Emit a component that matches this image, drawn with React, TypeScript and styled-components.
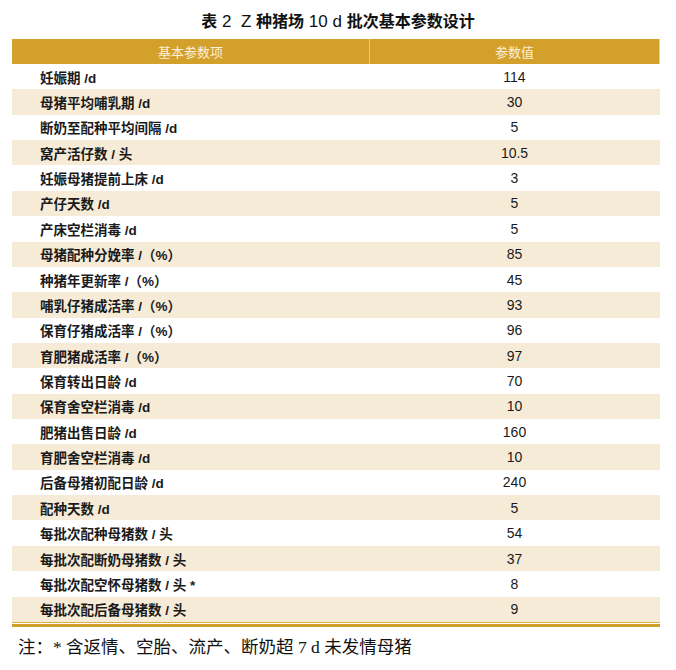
import React from "react";
import styled, { createGlobalStyle } from "styled-components";

const GlobalStyle = createGlobalStyle`
  html, body {
    margin: 0;
    padding: 0;
    background: #ffffff;
  }
  body {
    font-family: "Liberation Sans", Arial, "Noto Sans CJK SC", sans-serif;
    color: #1a1a1a;
  }
`;

const Page = styled.div`
  width: 648px;
  padding: 0 16px 0 12px;
`;

const Title = styled.h1`
  margin: 0;
  height: 39px;
  padding-top: 13px;
  box-sizing: border-box;
  text-align: center;
  font-size: 16px;
  line-height: 18px;
  font-weight: bold;
  color: #111;
  padding-left: 4px;
`;

const Latin = styled.span`
  font-weight: normal;
  font-size: 17px;
`;

const Table = styled.div`
  display: flex;
  flex-direction: column;
`;

const HeadRow = styled.div`
  display: grid;
  grid-template-columns: 357px 1fr;
  height: 25px;
  background: #d4a02c;
  border-right: 1px solid #ecd08f;
`;

const HeadCell = styled.div<{ $divider?: boolean }>`
  display: flex;
  align-items: center;
  justify-content: center;
  font-size: 13px;
  color: #fbf0da;
  border-left: ${({ $divider }) => ($divider ? "1px solid #eccb80" : "none")};
`;

const Row = styled.div<{ $shaded: boolean }>`
  display: grid;
  grid-template-columns: 357px 1fr;
  height: 25.36px;
  background: ${({ $shaded }) => ($shaded ? "#f6ebd6" : "#ffffff")};
`;

const NameCell = styled.div`
  display: flex;
  align-items: center;
  padding-left: 28px;
  font-size: 13.5px;
  font-weight: bold;
`;

const ValueCell = styled.div`
  display: flex;
  align-items: center;
  justify-content: center;
  font-size: 14px;
`;

const Rule = styled.div`
  height: 1px;
  border-top: 1px solid #dcae4c;
  border-bottom: 3px solid #d4a02c;
`;

const Note = styled.p`
  margin: 0;
  padding: 10px 0 0 6px;
  font-family: "Liberation Serif", "Times New Roman", "Noto Sans CJK SC", serif;
  font-size: 17.5px;
  line-height: 20px;
  color: #111;
`;

const params: [string, string][] = [
  ["妊娠期 /d", "114"],
  ["母猪平均哺乳期 /d", "30"],
  ["断奶至配种平均间隔 /d", "5"],
  ["窝产活仔数 / 头", "10.5"],
  ["妊娠母猪提前上床 /d", "3"],
  ["产仔天数 /d", "5"],
  ["产床空栏消毒 /d", "5"],
  ["母猪配种分娩率 /（%）", "85"],
  ["种猪年更新率 /（%）", "45"],
  ["哺乳仔猪成活率 /（%）", "93"],
  ["保育仔猪成活率 /（%）", "96"],
  ["育肥猪成活率 /（%）", "97"],
  ["保育转出日龄 /d", "70"],
  ["保育舍空栏消毒 /d", "10"],
  ["肥猪出售日龄 /d", "160"],
  ["育肥舍空栏消毒 /d", "10"],
  ["后备母猪初配日龄 /d", "240"],
  ["配种天数 /d", "5"],
  ["每批次配种母猪数 / 头", "54"],
  ["每批次配断奶母猪数 / 头", "37"],
  ["每批次配空怀母猪数 / 头 *", "8"],
  ["每批次配后备母猪数 / 头", "9"],
];

export default function App() {
  return (
    <Page>
      <GlobalStyle />
      <Title>
        表<Latin> 2&nbsp; Z </Latin>种猪场<Latin> 10 d </Latin>批次基本参数设计
      </Title>
      <Table>
        <HeadRow>
          <HeadCell>基本参数项</HeadCell>
          <HeadCell $divider>参数值</HeadCell>
        </HeadRow>
        {params.map(([name, value], i) => (
          <Row key={name} $shaded={i % 2 === 1}>
            <NameCell>{name}</NameCell>
            <ValueCell>{value}</ValueCell>
          </Row>
        ))}
        <Rule />
      </Table>
      <Note>注：* 含返情、空胎、流产、断奶超 7 d 未发情母猪</Note>
    </Page>
  );
}
